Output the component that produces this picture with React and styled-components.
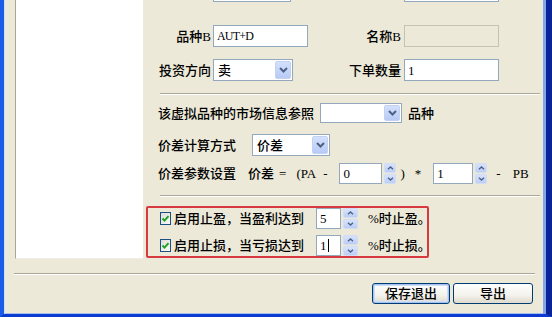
import React from "react";
import styled, { createGlobalStyle } from "styled-components";

const GlobalStyle = createGlobalStyle`
  html, body { margin: 0; padding: 0; width: 552px; height: 317px; overflow: hidden; background: #ece9d8; }
  #root { width: 552px; height: 317px; }
  * { box-sizing: border-box; }
`;

const Window = styled.div`
  width: 552px;
  height: 317px;
  display: flex;
  flex-direction: column;
  background: #ece9d8;
  border-left: 4px solid #1a5ce6;
  border-right: 6px solid #0b2399;
  border-bottom: 3px solid #0b3bd0;
  box-shadow: inset 1px 0 0 #d0ddf7, inset -3px 0 0 #88a4e8, inset 0 -1px 0 #a6bdf0;
  font-family: "Liberation Serif", "Noto Sans CJK SC", serif;
  font-size: 13px;
  font-weight: 500;
  color: #000;
  overflow: hidden;
`;

const Client = styled.div`
  flex: 1;
  display: flex;
  flex-direction: column;
  padding: 0 6px 0 11px;
`;

const MainArea = styled.div`
  display: flex;
  margin-top: -20px;
  height: 279px;
`;

const ListPanel = styled.div`
  width: 128px;
  background: #fff;
  border-left: 1px solid #a9a796;
  border-bottom: 1px solid #efeee6;
`;

const Form = styled.div`
  flex: 1;
  display: flex;
  flex-direction: column;
`;

const FieldRow = styled.div`
  display: grid;
  grid-template-columns: 70px 95px 96px 95px;
  align-items: center;
  height: ${(p) => p.$h}px;
  margin-top: ${(p) => p.$mt}px;
`;

const Label = styled.span`
  justify-self: end;
  padding-right: ${(p) => p.$pr}px;
  white-space: nowrap;
  line-height: 1;
`;

const Edit = styled.div`
  width: ${(p) => p.$w}px;
  height: ${(p) => p.$h || 21}px;
  border: 1px solid ${(p) => (p.$disabled ? "#c4c2b5" : "#93a8bd")};
  background: ${(p) => (p.$disabled ? "#ece9d8" : "#fff")};
  padding: 0 3px;
  display: flex;
  align-items: center;
  line-height: 1;
  white-space: nowrap;
  font-size: ${(p) => (p.$narrow ? 12 : 13)}px;
  letter-spacing: ${(p) => (p.$narrow ? -0.8 : 0)}px;
`;

const Caret = styled.span`
  display: inline-block;
  width: 1px;
  height: 13px;
  background: #000;
  margin-left: 1px;
`;

const Combo = styled.div`
  width: ${(p) => p.$w}px;
  height: ${(p) => p.$h}px;
  margin-left: ${(p) => p.$ml || 0}px;
  border: 1px solid #93a8bd;
  background: #fff;
  padding: 1px;
  display: flex;
  align-items: stretch;
`;

const ComboText = styled.span`
  flex: 1;
  display: flex;
  align-items: center;
  padding-left: 3px;
  line-height: 1;
`;

const DropBtn = styled.span`
  width: 16px;
  border: 1px solid #c3d1f4;
  border-radius: 2px;
  background: linear-gradient(180deg, #d3e0fd 0%, #b8cbf6 100%);
  display: flex;
  align-items: center;
  justify-content: center;
`;

const Chevron = () => (
  <svg width="9" height="6" viewBox="0 0 9 6">
    <polyline points="1,1 4.5,4.5 8,1" fill="none" stroke="#4d6185" strokeWidth="2" />
  </svg>
);

const Spin = styled.div`
  display: flex;
  align-items: center;
  margin-left: ${(p) => p.$ml}px;
`;

const SpinBtns = styled.div`
  width: ${(p) => p.$w}px;
  height: 21px;
  margin-left: 2px;
  display: flex;
  flex-direction: column;
  gap: 1px;
`;

const SpinHalf = styled.span`
  flex: 1;
  border-radius: 2px;
  background: linear-gradient(180deg, #d7e3fd 0%, #bccef6 100%);
  border: 1px solid #d2dcf4;
  display: flex;
  align-items: center;
  justify-content: center;
`;

const Arrow = ({ up }) => (
  <svg width="7" height="4" viewBox="0 0 7 4">
    <polyline
      points={up ? "1,3.3 3.5,1 6,3.3" : "1,0.7 3.5,3 6,0.7"}
      fill="none"
      stroke="#4d6185"
      strokeWidth="1.4"
    />
  </svg>
);

const SpinBox = ({ value, w, bw, ml, caret }) => (
  <Spin $ml={ml}>
    <Edit $w={w}>
      {value}
      {caret && <Caret />}
    </Edit>
    <SpinBtns $w={bw}>
      <SpinHalf>
        <Arrow up />
      </SpinHalf>
      <SpinHalf>
        <Arrow />
      </SpinHalf>
    </SpinBtns>
  </Spin>
);

const Etched = styled.div`
  height: 2px;
  border-top: 1px solid #aca899;
  border-bottom: 1px solid #fff;
  margin: ${(p) => p.$m};
`;

const InfoRow = styled.div`
  display: flex;
  align-items: center;
  height: 22px;
  margin-top: ${(p) => p.$mt}px;
  margin-left: 15px;
  white-space: nowrap;
`;

const Token = styled.span`
  margin-left: ${(p) => p.$ml || 0}px;
  line-height: 1;
`;

const Highlight = styled.div`
  width: 283px;
  height: 52px;
  margin: 9px 0 0 3px;
  border: 2px solid #d83a40;
  border-radius: 2px;
  padding-left: 12px;
  display: flex;
  flex-direction: column;
  gap: 6px;
`;

const CheckRow = styled.div`
  display: flex;
  align-items: center;
  height: 21px;
  white-space: nowrap;
`;

const CheckBox = styled.span`
  width: 13px;
  height: 13px;
  border: 1px solid #1c5180;
  background: linear-gradient(135deg, #dcdcd7 0%, #fafaf8 100%);
  display: flex;
  align-items: center;
  justify-content: center;
`;

const Check = () => (
  <svg width="9" height="9" viewBox="0 0 9 9">
    <polyline points="1.5,4.5 3.5,6.6 7.5,2.2" fill="none" stroke="#21a121" strokeWidth="2" />
  </svg>
);

const ButtonRow = styled.div`
  display: flex;
  justify-content: flex-end;
  gap: 3px;
  margin-top: 8px;
  padding-right: 7px;
`;

const Button = styled.button`
  width: ${(p) => p.$w}px;
  height: 21px;
  border: 1px solid #003c74;
  border-radius: 3px;
  background: linear-gradient(180deg, #ffffff 0%, #f3f2ec 60%, #e3e0d4 90%, #d6d0c5 100%);
  box-shadow: ${(p) =>
    p.$default ? "inset 0 0 0 1px #a9c3f0, inset 0 0 0 2px #cddcf7" : "inset 0 -1px 0 #e2ded0"};
  font-family: "Liberation Serif", "Noto Sans CJK SC", serif;
  font-size: 13px;
  font-weight: 500;
  color: #000;
  padding: 0;
  line-height: 1;
`;

export default function App() {
  return (
    <>
      <GlobalStyle />
      <Window>
        <Client>
          <MainArea>
            <ListPanel />
            <Form>
              <FieldRow $h={21} $mt={1}>
                <span />
                <Edit $w={78} />
                <span />
                <Edit $w={95} />
              </FieldRow>
              <FieldRow $h={22} $mt={23}>
                <Label $pr={2}>品种B</Label>
                <Edit $w={95} $h={22} $narrow>
                  AUT+D
                </Edit>
                <Label $pr={3}>名称B</Label>
                <Edit $w={95} $h={22} $disabled />
              </FieldRow>
              <FieldRow $h={22} $mt={12}>
                <Label $pr={2}>投资方向</Label>
                <Combo $w={80} $h={22}>
                  <ComboText>卖</ComboText>
                  <DropBtn>
                    <Chevron />
                  </DropBtn>
                </Combo>
                <Label $pr={3}>下单数量</Label>
                <Edit $w={95} $h={22}>1</Edit>
              </FieldRow>
              <Etched $m="12px 0 0 17px" />
              <InfoRow $mt={7}>
                <Token>该虚拟品种的市场信息参照</Token>
                <Combo $w={82} $h={20} $ml={6}>
                  <ComboText />
                  <DropBtn>
                    <Chevron />
                  </DropBtn>
                </Combo>
                <Token $ml={6}>品种</Token>
              </InfoRow>
              <InfoRow $mt={10}>
                <Token>价差计算方式</Token>
                <Combo $w={78} $h={22} $ml={16}>
                  <ComboText>价差</ComboText>
                  <DropBtn>
                    <Chevron />
                  </DropBtn>
                </Combo>
              </InfoRow>
              <InfoRow $mt={6}>
                <Token>价差参数设置</Token>
                <Token $ml={12}>价差</Token>
                <Token $ml={5}>=</Token>
                <Token $ml={10}>(PA</Token>
                <Token $ml={7}>-</Token>
                <SpinBox value="0" w={43} bw={12} ml={12} />
                <Token $ml={4}>)</Token>
                <Token $ml={10}>*</Token>
                <SpinBox value="1" w={40} bw={12} ml={12} />
                <Token $ml={9}>-</Token>
                <Token $ml={12}>PB</Token>
              </InfoRow>
              <Etched $m="11px 0 0 17px" />
              <Highlight>
                <CheckRow>
                  <CheckBox>
                    <Check />
                  </CheckBox>
                  <Token $ml={3}>启用止盈，当盈利达到</Token>
                  <SpinBox value="5" w={25} bw={15} ml={12} />
                  <Token $ml={10}>%时止盈。</Token>
                </CheckRow>
                <CheckRow>
                  <CheckBox>
                    <Check />
                  </CheckBox>
                  <Token $ml={3}>启用止损，当亏损达到</Token>
                  <SpinBox value="1" w={25} bw={15} ml={12} caret />
                  <Token $ml={10}>%时止损。</Token>
                </CheckRow>
              </Highlight>
            </Form>
          </MainArea>
          <Etched $m="14px 5px 0 -1px" />
          <ButtonRow>
            <Button $w={78} $default>
              保存退出
            </Button>
            <Button $w={80}>导出</Button>
          </ButtonRow>
        </Client>
      </Window>
    </>
  );
}
